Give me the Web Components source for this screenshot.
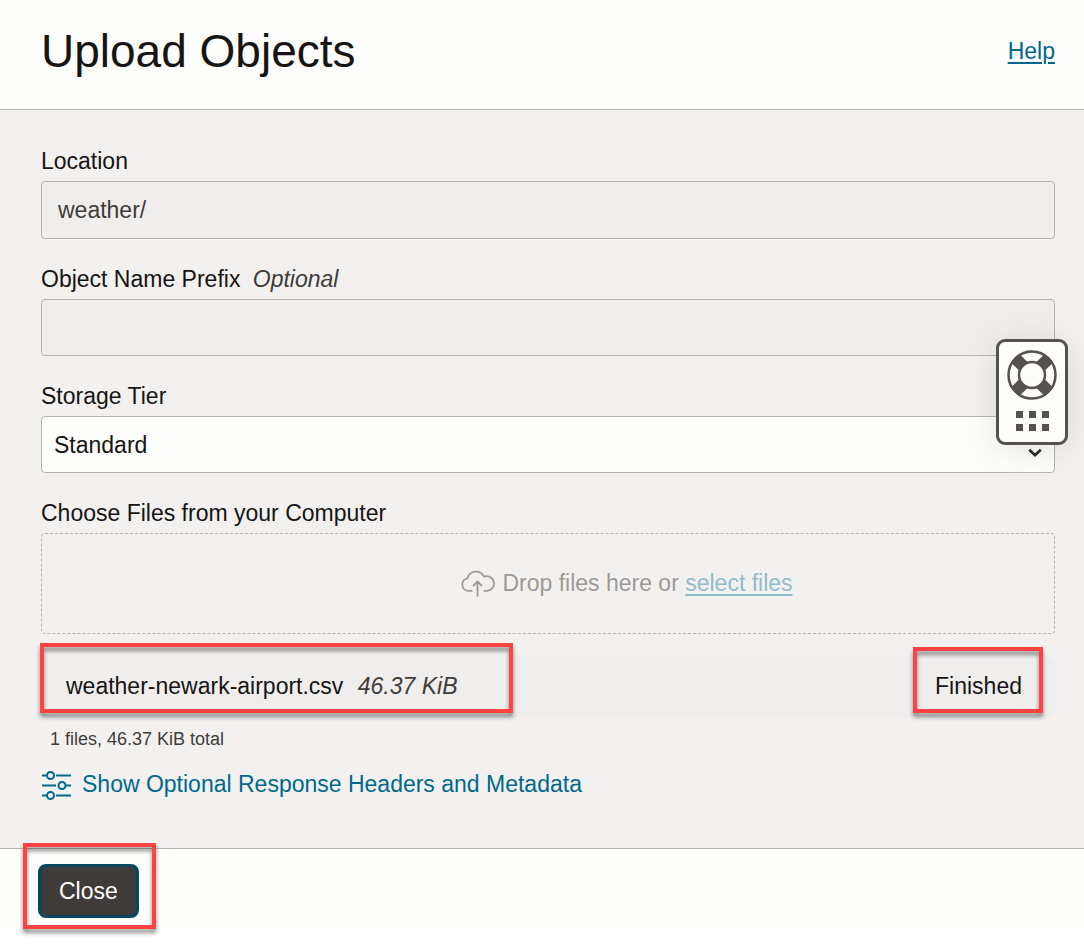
<!DOCTYPE html>
<html lang="en">
<head>
<meta charset="utf-8">
<meta name="viewport" content="width=device-width, initial-scale=1">
<title>Upload Objects</title>
<style>
  html { background: #fff; }
  body {
    margin: 0;
    min-height: 100vh;
    font-family: "Liberation Sans", Arial, sans-serif;
    font-size: 23px;
    line-height: 28px;
    color: #161513;
    --ink: #161513;
    --muted: #403c38;
    --link: #00688c;
    --line: #b7b3af;
    --surface: #fdfdfb;
    --field: #f0eeed;
  }
</style>
</head>
<body>
<upload-dialog>
  <dialog-header slot="header" heading="Upload Objects"></dialog-header>
  <text-field label="Location" value="weather/" readonly></text-field>
  <text-field label="Object Name Prefix" hint="Optional"></text-field>
  <select-field label="Storage Tier"><option>Standard</option><option>Infrequent Access</option><option>Archive</option></select-field>
  <drop-zone></drop-zone>
  <file-row name="weather-newark-airport.csv" size="46.37 KiB" status="Finished"></file-row>
  <file-total>1 files, 46.37 KiB total</file-total>
  <options-toggle>Show Optional Response Headers and Metadata</options-toggle>
  <close-button slot="footer">Close</close-button>
</upload-dialog>
<support-widget></support-widget>

<script>
  class Base extends HTMLElement {
    connectedCallback() {
      if (this.shadowRoot) return;
      this.attachShadow({ mode: 'open' }).innerHTML =
        '<style>*{box-sizing:border-box}:host{display:block;box-sizing:border-box}</style>' + this.render();
      this.ready();
    }
    attr(name) { return this.getAttribute(name) || ''; }
    ready() {}
  }

  customElements.define('upload-dialog', class extends Base {
    render() {
      return `<style>
        :host { background: var(--surface); }
        main {
          background: #f3f1f0;
          border-top: 1px solid var(--line);
          border-bottom: 1px solid var(--line);
          padding: 37px 29px 48px 41px;
        }
        footer { padding: 15px 38px 10px; }
      </style>
      <slot name="header"></slot>
      <main><slot></slot></main>
      <footer><slot name="footer"></slot></footer>`;
    }
  });

  customElements.define('dialog-header', class extends Base {
    render() {
      return `<style>
        header {
          display: flex; align-items: center; justify-content: space-between;
          padding: 23px 29px 30px 41px;
        }
        h1 { margin: 0; font-size: 46px; line-height: 56px; font-weight: 400; }
        a { color: var(--link); text-decoration-thickness: 2px; text-underline-offset: 3px; }
      </style>
      <header><h1>${this.attr('heading')}</h1><a href="#help">Help</a></header>`;
    }
  });

  customElements.define('text-field', class extends Base {
    render() {
      const ro = this.hasAttribute('readonly') ? 'readonly' : '';
      return `<style>
        :host { margin-bottom: 26px; }
        label { display: block; margin-bottom: 6px; }
        i { color: var(--muted); margin-left: 6px; }
        input {
          display: block; width: 100%; height: 57px; margin: 0; padding: 0 16px;
          font: inherit; color: var(--muted); background: var(--field);
          border: 1px solid var(--line); border-radius: 4px; outline: 0;
        }
        input[readonly] { height: 58px; }
      </style>
      <label for="box">${this.attr('label')} ${this.attr('hint') && `<i>${this.attr('hint')}</i>`}</label>
      <input id="box" type="text" value="${this.attr('value')}" ${ro}>`;
    }
  });

  customElements.define('select-field', class extends Base {
    render() {
      return `<style>
        :host { margin-bottom: 26px; }
        label { display: block; margin-bottom: 6px; }
        div { position: relative; }
        select {
          appearance: none; display: block; width: 100%; height: 57px; margin: 0; padding: 0 12px;
          font: inherit; color: var(--ink); background: var(--surface);
          border: 1px solid var(--line); border-radius: 4px; outline: 0;
        }
        svg { position: absolute; right: 13px; bottom: 15px; pointer-events: none; }
      </style>
      <label for="list">${this.attr('label')}</label>
      <div><select id="list"></select>
        <svg width="14" height="10" viewBox="0 0 14 10" fill="none" stroke="#2d2a28" stroke-width="2.8" aria-hidden="true"><path d="M1.200 1.800 7 7.200l5.800-5.400"/></svg>
      </div>`;
    }
    ready() {
      this.shadowRoot.querySelector('select').append(...this.querySelectorAll('option'));
    }
  });

  customElements.define('drop-zone', class extends Base {
    render() {
      return `<style>
        :host { margin-bottom: 23px; }
        p { margin: 0 0 6px; }
        .zone {
          display: flex; align-items: center; justify-content: center; gap: 7px;
          height: 101px; padding: 0 0 2px 158px;
          border: 1px dashed var(--line); border-radius: 4px; color: #9c9997;
        }
        svg { flex: none; }
        a { color: #91bcca; text-decoration-thickness: 2px; text-underline-offset: 3px; }
      </style>
      <p>Choose Files from your Computer</p>
      <div class="zone">
        <svg width="34" height="28" viewBox="0 0 34 28" fill="none" stroke="#9c9997" stroke-width="1.8" aria-hidden="true">
          <path d="M11.500 21.800H7.500a6.300 6.300 0 0 1-1-12.500 8.800 8.800 0 0 1 16.500-1.600 7.300 7.300 0 1 1 3 14.100h-3.500M16.500 27.500V12.500M12 17l4.500-4.500L21 17"/>
        </svg>
        <span>Drop files here or <a href="#select">select files</a></span>
      </div>`;
    }
  });

  customElements.define('mark-box', class extends Base {
    render() {
      return `<style>
        :host {
          position: absolute; border: 4px solid #ff4343; pointer-events: none;
          filter: drop-shadow(0 4px 2px rgba(0, 0, 0, .45));
        }
      </style>`;
    }
  });

  customElements.define('file-row', class extends Base {
    render() {
      return `<style>
        .row {
          position: relative; display: flex; align-items: center; justify-content: space-between;
          height: 60px; padding: 0 33px 2px 25px; background: var(--field); border-radius: 8px;
        }
        i { color: var(--muted); margin-left: 8px; }
        .file { left: -1px; top: -14px; width: 473px; bottom: 4px; }
        .state { right: 12px; top: -10px; width: 130px; bottom: 4px; }
      </style>
      <div class="row">
        <span>${this.attr('name')} <i>${this.attr('size')}</i></span>
        <span>${this.attr('status')}</span>
        <mark-box class="file"></mark-box>
        <mark-box class="state"></mark-box>
      </div>`;
    }
  });

  customElements.define('file-total', class extends Base {
    render() {
      return `<style>
        :host { font-size: 18px; line-height: 20px; color: var(--muted); margin: 12px 9px 21px; }
      </style><slot></slot>`;
    }
  });

  customElements.define('options-toggle', class extends Base {
    render() {
      return `<style>
        a { display: flex; width: fit-content; align-items: center; gap: 10px; color: var(--link); text-decoration: none; }
        svg { flex: none; }
        span { padding-bottom: 2px; }
      </style>
      <a href="#metadata">
        <svg width="31" height="30" viewBox="0 0 31 30" fill="none" stroke="#00688c" stroke-width="2" aria-hidden="true">
          <path d="M1 5.500h4.500M15 5.500h15M1 15.500h14M25 15.500h5M1 25.500h4.500M15 25.500h15"/>
          <circle cx="9.500" cy="5.500" r="3.500"/><circle cx="21" cy="15.500" r="3.500"/><circle cx="9.500" cy="25.500" r="3.500"/>
        </svg>
        <span><slot></slot></span>
      </a>`;
    }
  });

  customElements.define('close-button', class extends Base {
    render() {
      return `<style>
        :host { position: relative; width: fit-content; }
        button {
          display: block; height: 54px; margin: 0; padding: 0 18px;
          font: inherit; color: #fff; background: #3e3b39;
          border: 3px solid #04495f; border-radius: 8px;
        }
        mark-box { inset: -21px -17px -11px -15px; }
      </style>
      <button type="button"><slot></slot></button><mark-box></mark-box>`;
    }
  });

  customElements.define('support-widget', class extends Base {
    render() {
      return `<style>
        :host { position: absolute; right: 16px; top: 339px; }
        button {
          display: flex; flex-direction: column; align-items: center; gap: 11px;
          width: 72px; height: 106px; margin: 0; padding: 8px 0 0;
          background: var(--surface); border: 3px solid #56514d; border-radius: 9px;
          box-shadow: 0 4px 32px rgba(0, 0, 0, .1);
        }
        svg { display: block; }
      </style>
      <button type="button" aria-label="Support">
        <svg width="50" height="50" viewBox="0 0 50 50" fill="none" stroke="#56514d">
          <path stroke-width="12" d="M8.400 8.400 17 17M41.600 8.400 33 17M8.400 41.600 17 33M41.600 41.600 33 33"/>
          <circle cx="25" cy="25" r="13" fill="#fdfdfb" stroke-width="2.500"/>
          <circle cx="25" cy="25" r="23.500" stroke-width="2.500"/>
        </svg>
        <svg width="34" height="21" viewBox="0 0 34 21" fill="#56514d">
          <path d="M1 0h7v7H1zM14 0h7v7h-7zM27 0h7v7h-7zM1 13h7v7H1zM14 13h7v7h-7zM27 13h7v7h-7z"/>
        </svg>
      </button>`;
    }
  });
</script>
</body>
</html>
